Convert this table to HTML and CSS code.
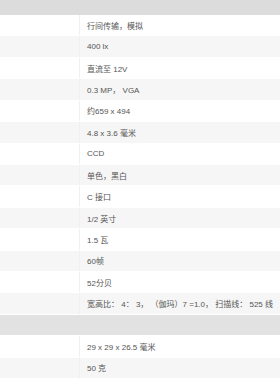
FILE: index.html
```html
<!DOCTYPE html>
<html>
<head>
<meta charset="utf-8">
<link rel="stylesheet" href="styles.css">
</head>
<body>
<div class="spec">
  <div class="row head"><div class="k"></div><div class="v"></div></div>
  <div class="row"><div class="k"></div><div class="v">行间传输，模拟</div></div>
  <div class="row alt"><div class="k"></div><div class="v">400 lx</div></div>
  <div class="row"><div class="k"></div><div class="v">直流至 12V</div></div>
  <div class="row alt"><div class="k"></div><div class="v">0.3 MP， VGA</div></div>
  <div class="row"><div class="k"></div><div class="v">约659 x 494</div></div>
  <div class="row alt"><div class="k"></div><div class="v">4.8 x 3.6 毫米</div></div>
  <div class="row"><div class="k"></div><div class="v">CCD</div></div>
  <div class="row alt"><div class="k"></div><div class="v">单色，黑白</div></div>
  <div class="row"><div class="k"></div><div class="v">C 接口</div></div>
  <div class="row alt"><div class="k"></div><div class="v">1/2 英寸</div></div>
  <div class="row"><div class="k"></div><div class="v">1.5 瓦</div></div>
  <div class="row alt"><div class="k"></div><div class="v">60帧</div></div>
  <div class="row"><div class="k"></div><div class="v">52分贝</div></div>
  <div class="row alt"><div class="k"></div><div class="v">宽高比： 4： 3， （伽玛）7 =1.0， 扫描线： 525 线</div></div>
  <div class="row section"><div class="k"></div><div class="v"></div></div>
  <div class="row"><div class="k"></div><div class="v">29 x 29 x 26.5 毫米</div></div>
  <div class="row alt"><div class="k"></div><div class="v">50 克</div></div>
</div>
</body>
</html>
```
FILE: styles.css
```css
html, body {
  margin: 0;
  padding: 0;
  background: #fff;
}
.spec {
  display: flex;
  flex-direction: column;
  font-family: "Liberation Sans", "Noto Sans CJK SC", sans-serif;
  font-size: 8px;
  color: #555;
}
.row {
  display: grid;
  grid-template-columns: 80px 1fr;
  height: calc(300px / 14);
  box-sizing: border-box;
  border-bottom: 1px solid #fff;
  background: #fff;
}
.row.head {
  height: 15px;
  background: #dcdcdc;
  border-bottom: none;
}
.row.alt {
  background: #f6f6f6;
}
.row.section {
  background: #e2e2e2;
}
.k {
  border-right: 1px solid #f0f0f0;
}
.head .k,
.section .k {
  border-right: none;
}
.v {
  display: flex;
  align-items: center;
  padding-left: 7px;
  white-space: nowrap;
}
```
